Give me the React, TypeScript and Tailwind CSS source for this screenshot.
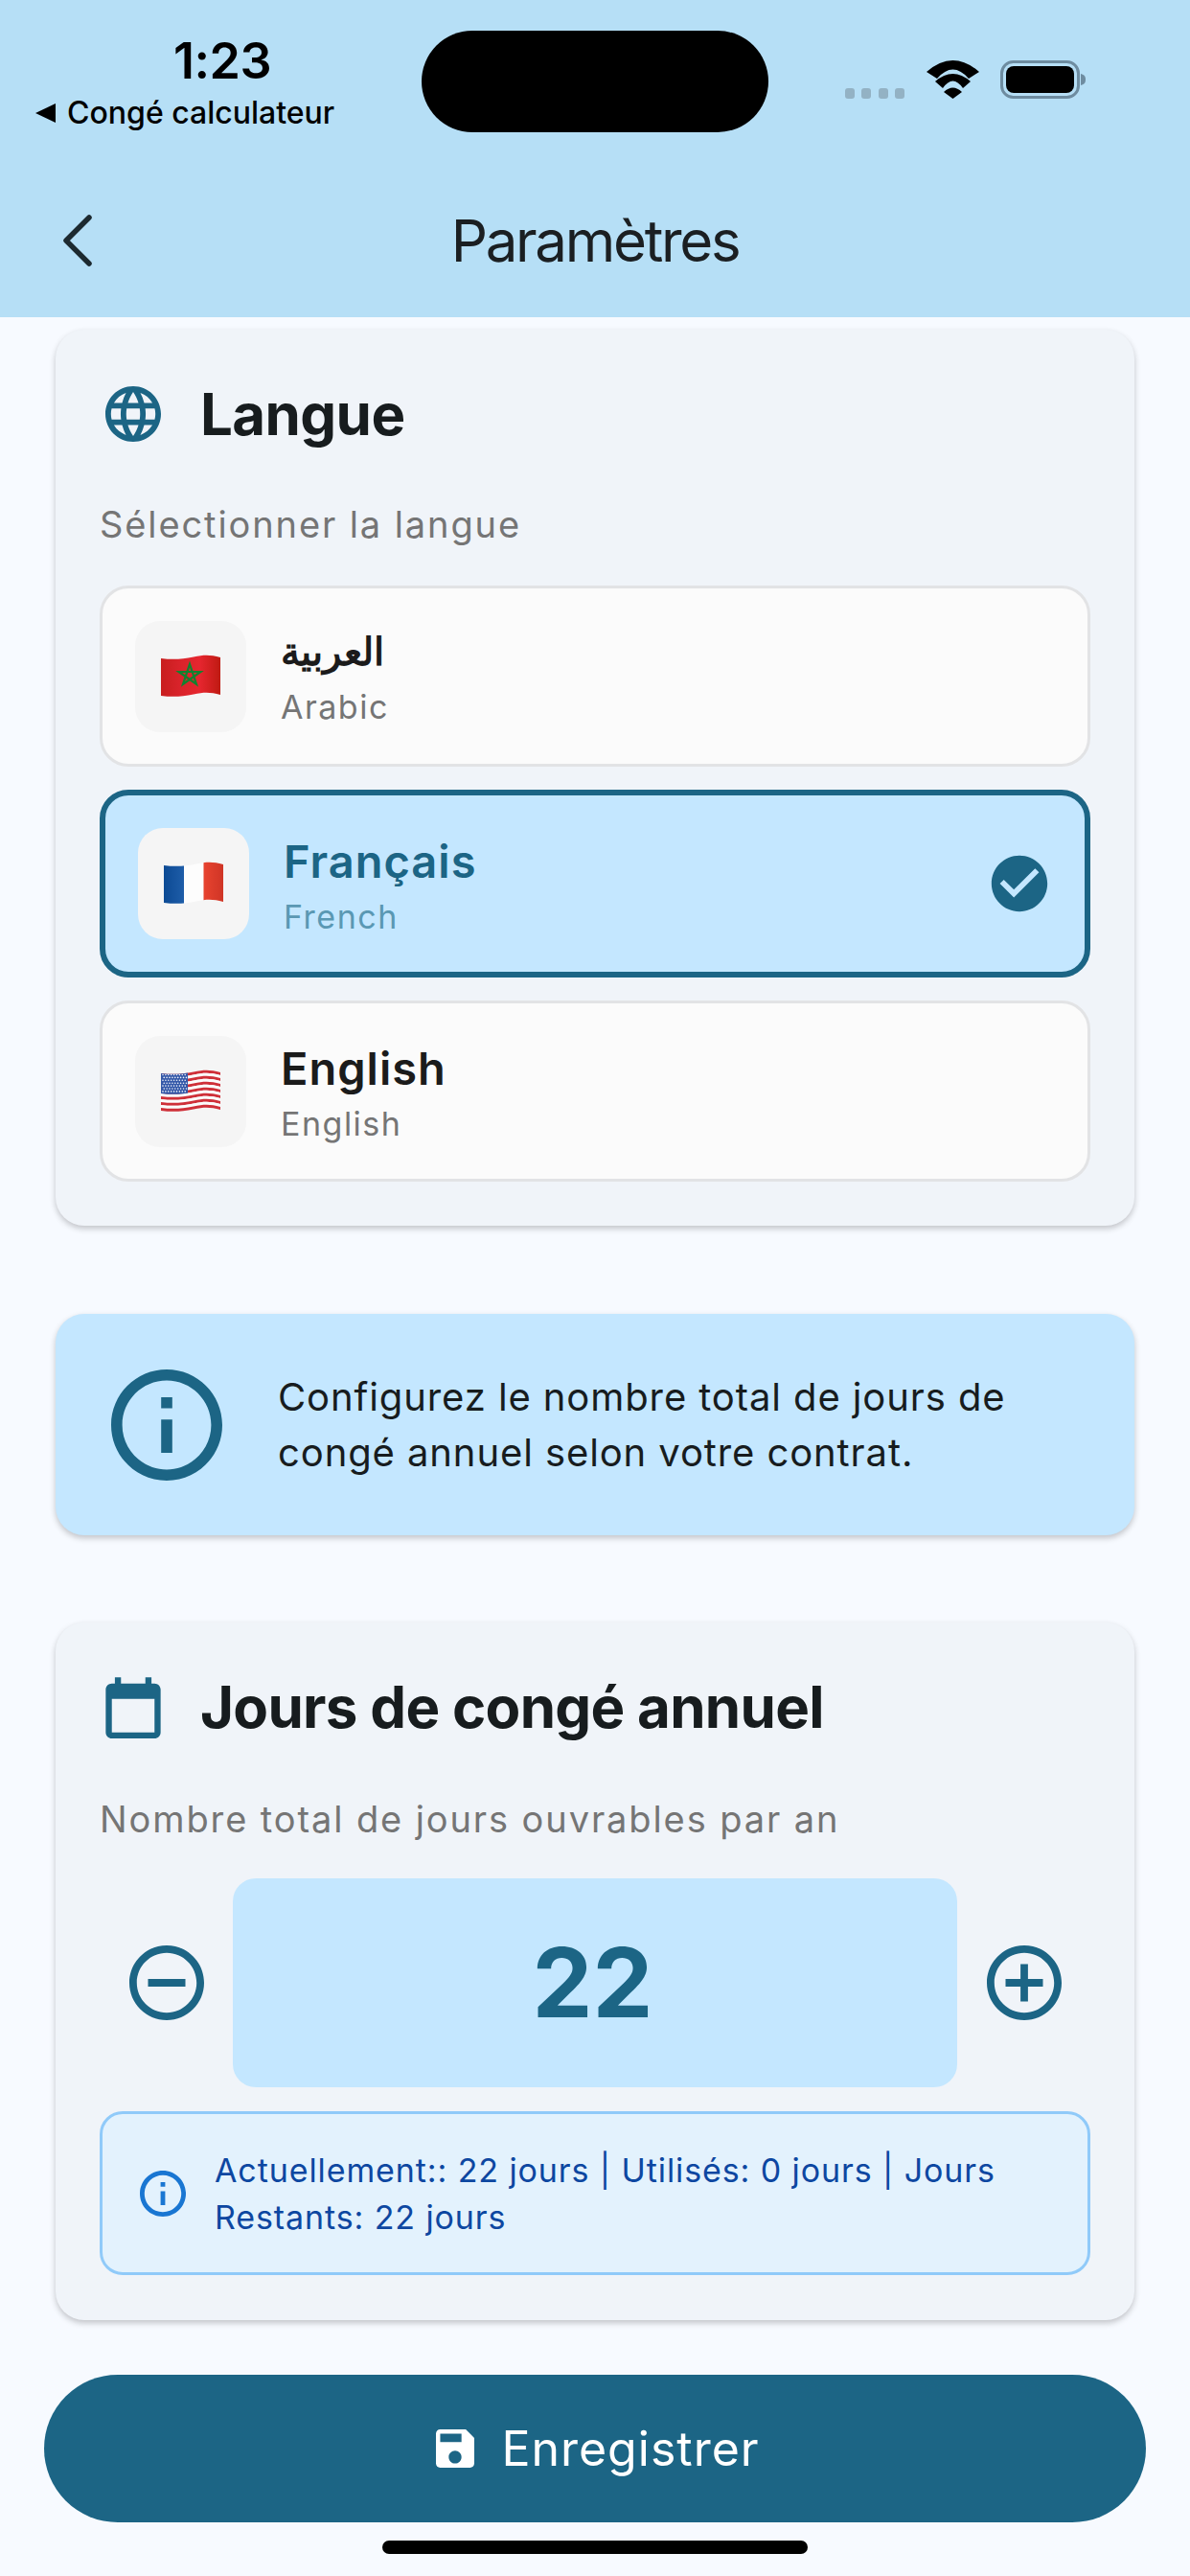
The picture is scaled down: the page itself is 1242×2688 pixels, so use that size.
import React from "react";

const bandPath = (y0: number, y1: number) => {
  const b = y1;
  return `M 0 ${y0} C 12 ${y0 + 1.5}, 22 ${y0 + 1}, 34 ${y0 - 1.5} C 46 ${y0 - 4}, 52 ${y0 - 3.5}, 62 ${y0 - 1} L 62 ${b - 1} C 52 ${b - 3.5}, 46 ${b - 4}, 34 ${b - 1.5} C 22 ${b + 1}, 12 ${b + 1.5}, 0 ${b} Z`;
};

function Morocco() {
  return (
    <svg viewBox="0 0 62 46" className="w-[62px] h-[46px]">
      <defs>
        <linearGradient id="ma" x1="0" x2="1" y1="0" y2="0">
          <stop offset="0" stopColor="#C81E1E" />
          <stop offset="0.3" stopColor="#D8232A" />
          <stop offset="0.65" stopColor="#E6262F" />
          <stop offset="1" stopColor="#BF1A12" />
        </linearGradient>
      </defs>
      <path d={bandPath(4, 43)} fill="url(#ma)" />
      <path d="M30 10 L37 31 L18.600 18 L41.400 18 L23 31 Z" fill="none" stroke="#12822F" strokeWidth="2.200" strokeLinejoin="miter" />
    </svg>
  );
}

function France() {
  return (
    <svg viewBox="0 0 62 46" className="w-[62px] h-[46px]">
      <defs>
        <clipPath id="fr">
          <path d={bandPath(4, 43)} />
        </clipPath>
        <linearGradient id="frb" x1="0" x2="1" y1="0" y2="0">
          <stop offset="0" stopColor="#0C4A94" />
          <stop offset="1" stopColor="#1E5DA8" />
        </linearGradient>
        <linearGradient id="frr" x1="0" x2="1" y1="0" y2="0">
          <stop offset="0" stopColor="#E8432F" />
          <stop offset="1" stopColor="#CF3526" />
        </linearGradient>
      </defs>
      <g clipPath="url(#fr)">
        <rect x="0" y="0" width="21" height="46" fill="url(#frb)" />
        <rect x="21" y="0" width="20.500" height="46" fill="#FDFDFD" />
        <rect x="41.500" y="0" width="20.500" height="46" fill="url(#frr)" />
      </g>
    </svg>
  );
}

function Usa() {
  const stripes = Array.from({ length: 13 }, (_, i) => i);
  const h = 39 / 13;
  const dots: React.ReactNode[] = [];
  for (let r = 0; r < 7; r++) {
    for (let c = 0; c < 9; c++) {
      dots.push(<circle key={`${r}-${c}`} cx={2 + c * 2.9 + (r % 2) * 1.2} cy={5.500 + r * 2.900} r={0.800} fill="#F2F5FB" />);
    }
  }
  return (
    <svg viewBox="0 0 62 46" className="w-[62px] h-[46px]">
      <defs>
        <clipPath id="uscanton">
          <path d={bandPath(4, 25)} />
        </clipPath>
      </defs>
      {stripes.map((i) => (
        <path key={i} d={bandPath(4 + i * h, 4 + (i + 1) * h)} fill={i % 2 === 0 ? "#CF3039" : "#FBFBFB"} />
      ))}
      <g clipPath="url(#uscanton)">
        <rect x="0" y="0" width="28" height="28" fill="#3458A8" />
        {dots}
      </g>
    </svg>
  );
}

function LangRow({
  flag,
  name,
  sub,
  active,
  rtl,
}: {
  flag: React.ReactNode;
  name: string;
  sub: string;
  active?: boolean;
  rtl?: boolean;
}) {
  return (
    <div
      className={
        active
          ? "flex items-center h-[196px] rounded-[30px] border-[6px] border-[#1C6585] bg-[#C4E7FF] pl-[34px] pr-[33px]"
          : "flex items-center h-[189px] rounded-[30px] border-[3px] border-[#E2E3E5] bg-[#FBFBFB] pl-[34px] pr-[33px]"
      }
    >
      <div className="w-[116px] h-[116px] rounded-[26px] bg-[#F5F5F5] flex items-center justify-center shrink-0">
        {flag}
      </div>
      <div className={rtl ? "ml-[36px] pt-[3px] flex flex-col" : "ml-[36px] pt-[7px] flex flex-col"}>
        <div
          className={
            active
              ? "text-[47px] leading-[58px] font-semibold tracking-[1px] text-[#1C6585]"
              : rtl
                ? "text-[40px] leading-[58px] font-semibold text-[#1B1B1B]"
                : "text-[47px] leading-[58px] font-semibold tracking-[1px] text-[#1B1B1B]"
          }
        >
          {name}
        </div>
        <div
          className={
            active
              ? "mt-[4px] text-[34px] leading-[50px] tracking-[1.5px] text-[#5A98B3]"
              : "mt-[4px] text-[34px] leading-[50px] tracking-[1.5px] text-[#757575]"
          }
        >
          {sub}
        </div>
      </div>
      {active && (
        <svg viewBox="0 0 24 24" className="w-[70px] h-[70px] ml-auto" fill="#1C6585">
          <path d="M12 2C6.48 2 2 6.48 2 12s4.48 10 10 10 10-4.48 10-10S17.52 2 12 2zm-2 15l-5-5 1.41-1.41L10 14.17l7.59-7.59L19 8l-9 9z" />
        </svg>
      )}
    </div>
  );
}

const cardCls =
  "mx-[58px] rounded-[30px] bg-[#F0F4F9] shadow-[0_3px_6px_rgba(0,0,0,0.22)]";

export default function App() {
  return (
    <div
      className="w-[1242px] h-[2688px] overflow-hidden bg-[#F7FAFF] flex flex-col"
      style={{ fontFamily: "Inter, 'Noto Sans', 'Liberation Sans', sans-serif" }}
    >
      {/* Header */}
      <div className="h-[331px] bg-[#B6DFF6] flex flex-col shrink-0">
        <div className="h-[170px] flex items-start">
          <div className="w-[440px] pt-[37px] pl-[37px] flex flex-col items-start shrink-0">
            <div className="ml-[144px] text-[52px] leading-[54px] font-semibold tracking-[-0.5px] text-black">1:23</div>
            <div className="flex items-center mt-[7px]">
              <svg viewBox="0 0 21 20" className="w-[21px] h-[20px] mr-[12px]" fill="#000">
                <path d="M21 0 L0 10 L21 20 Z" />
              </svg>
              <span className="text-[32px] leading-[40px] font-medium text-black">Congé calculateur</span>
            </div>
          </div>
          <div className="w-[362px] h-[106px] mt-[32px] rounded-[53px] bg-black shrink-0" />
          <div className="flex items-start mt-[63px] ml-[80px]">
            <svg viewBox="0 0 62 11" className="w-[62px] h-[11px] mt-[29px]" fill="#93B2C4">
              <rect x="0" y="0" width="10" height="11" rx="3" />
              <rect x="17" y="0" width="10" height="11" rx="3" />
              <rect x="35" y="0" width="10" height="11" rx="3" />
              <rect x="52" y="0" width="10" height="11" rx="3" />
            </svg>
            <svg viewBox="0 0 55 40" className="w-[55px] h-[40px] ml-[23px]" fill="#000">
              <path d="M0 12 Q27.500 -12 55 12 L44 19 Q27.500 0 11 19 Z" />
              <path d="M9 22 Q27.500 6 46 22 L38 29 Q27.500 14 17 29 Z" />
              <path d="M18 33 Q27.500 24 37 33 L27.500 40 Z" />
            </svg>
            <svg viewBox="0 0 90 40" className="w-[90px] h-[40px] ml-[22px]">
              <rect x="1.500" y="1.500" width="80" height="37" rx="12" fill="none" stroke="#6E8CA0" strokeWidth="3" />
              <rect x="6" y="6" width="71" height="28" rx="8" fill="#000" />
              <path d="M84 14 C88 15 89 17 89 20 C89 23 88 25 84 26 Z" fill="#6E8CA0" />
            </svg>
          </div>
        </div>
        <div className="flex-1 flex items-center pl-[65px] relative">
          <svg viewBox="0 0 32 54" className="w-[32px] h-[54px]" fill="none" stroke="#1D2A30" strokeWidth="5.500" strokeLinecap="round" strokeLinejoin="round">
            <path d="M28 3 L4 27 L28 51" />
          </svg>
          <div className="absolute inset-0 flex items-center justify-center text-[60px] text-[#1B1F22] tracking-[-2.300px]">
            Paramètres
          </div>
        </div>
      </div>

      {/* Language card */}
      <div className={`${cardCls} mt-[13px] h-[935px] px-[46px] pt-[49px]`}>
        <div className="flex items-center gap-[41px] h-[78px] pl-[6px]">
          <svg viewBox="2 2 20 20" className="w-[58px] h-[58px] shrink-0" fill="#1C6585">
            <path d="M11.99 2C6.47 2 2 6.48 2 12s4.47 10 9.99 10C17.52 22 22 17.52 22 12S17.52 2 11.99 2zm6.93 6h-2.95c-.32-1.25-.78-2.45-1.38-3.56 1.84.63 3.37 1.91 4.33 3.56zM12 4.040c.83 1.200 1.480 2.530 1.910 3.960h-3.820c.43-1.430 1.080-2.760 1.910-3.960zM4.260 14C4.100 13.360 4 12.690 4 12s.1-1.360.26-2h3.380c-.08.66-.14 1.320-.14 2 0 .68.060 1.340.14 2H4.260zm.82 2h2.950c.32 1.250.78 2.450 1.380 3.560-1.840-.63-3.370-1.900-4.330-3.560zm2.950-8H5.080c.96-1.660 2.490-2.930 4.330-3.560C8.810 5.550 8.350 6.750 8.030 8zM12 19.960c-.83-1.200-1.480-2.530-1.910-3.960h3.820c-.43 1.430-1.080 2.760-1.910 3.960zM14.340 14H9.660c-.09-.66-.16-1.320-.16-2 0-.68.070-1.350.16-2h4.680c.09.650.16 1.320.16 2 0 .68-.07 1.340-.16 2zm.25 5.560c.6-1.110 1.060-2.310 1.380-3.560h2.950c-.96 1.650-2.490 2.930-4.330 3.560zM16.360 14c.08-.66.14-1.320.14-2 0-.68-.06-1.340-.14-2h3.380c.16.640.26 1.310.26 2s-.1 1.360-.26 2h-3.380z" />
          </svg>
          <div className="text-[60px] leading-[78px] font-bold tracking-[-0.6px] text-[#171C1E]">Langue</div>
        </div>
        <div className="mt-[51px] text-[38px] leading-[50px] tracking-[1.9px] text-[#757575]">
          Sélectionner la langue
        </div>
        <div className="mt-[39px] flex flex-col gap-[24px]">
          <LangRow flag={<Morocco />} name="العربية" sub="Arabic" rtl />
          <LangRow flag={<France />} name="Français" sub="French" active />
          <LangRow flag={<Usa />} name="English" sub="English" />
        </div>
      </div>

      {/* Info card */}
      <div className="mx-[58px] mt-[92px] h-[231px] rounded-[30px] bg-[#C4E7FF] shadow-[0_3px_6px_rgba(0,0,0,0.22)] flex items-center pl-[58px]">
        <svg viewBox="2 2 20 20" className="w-[116px] h-[116px] shrink-0" fill="#1C6585">
          <path d="M11 7h2v2h-2zm0 4h2v6h-2zm1-9C6.480 2 2 6.480 2 12s4.480 10 10 10 10-4.480 10-10S17.520 2 12 2zm0 18c-4.410 0-8-3.590-8-8s3.590-8 8-8 8 3.590 8 8-3.590 8-8 8z" />
        </svg>
        <div className="ml-[58px] text-[40px] leading-[58px] tracking-[0.9px] text-[#171C1E]">
          Configurez le nombre total de jours de
          <br />
          congé annuel selon votre contrat.
        </div>
      </div>

      {/* Days card */}
      <div className={`${cardCls} mt-[91px] h-[728px] px-[46px] pt-[49px]`}>
        <div className="flex items-center gap-[41px] h-[78px] pl-[6px]">
          <svg viewBox="3 1 18 22" className="w-[58px] h-[70px] shrink-0 -mt-[4px]" fill="#1C6585">
            <path d="M19 3h-1V1h-2v2H8V1H6v2H5c-1.110 0-2 .9-2 2v14c0 1.100.89 2 2 2h14c1.100 0 2-.9 2-2V5c0-1.100-.9-2-2-2zm0 16H5V8h14v11z" transform="translate(0 2)" />
          </svg>
          <div className="text-[60px] leading-[78px] font-bold tracking-[-0.7px] text-[#171C1E]">
            Jours de congé annuel
          </div>
        </div>
        <div className="mt-[53px] text-[38px] leading-[50px] tracking-[1.9px] text-[#757575]">
          Nombre total de jours ouvrables par an
        </div>
        <div className="mt-[37px] flex items-center">
          <div className="w-[139px] flex justify-center shrink-0">
            <svg viewBox="2 2 20 20" className="w-[78px] h-[78px]" fill="#1C6585">
              <path d="M7 11v2h10v-2H7zm5-9C6.480 2 2 6.480 2 12s4.480 10 10 10 10-4.480 10-10S17.520 2 12 2zm0 18c-4.410 0-8-3.590-8-8s3.590-8 8-8 8 3.590 8 8-3.590 8-8 8z" />
            </svg>
          </div>
          <div className="w-[756px] h-[218px] pr-[5px] rounded-[24px] bg-[#C4E7FF] flex items-center justify-center text-[100px] font-bold text-[#1C6585]">
            22
          </div>
          <div className="flex-1 flex justify-center">
            <svg viewBox="2 2 20 20" className="w-[78px] h-[78px]" fill="#1C6585">
              <path d="M13 7h-2v4H7v2h4v4h2v-4h4v-2h-4V7zm-1-5C6.480 2 2 6.480 2 12s4.480 10 10 10 10-4.480 10-10S17.520 2 12 2zm0 18c-4.410 0-8-3.590-8-8s3.590-8 8-8 8 3.590 8 8-3.590 8-8 8z" />
            </svg>
          </div>
        </div>
        <div className="mt-[25px] h-[171px] rounded-[24px] border-[3px] border-[#90CAF9] bg-[#E3F2FD] flex items-center pl-[39px]">
          <svg viewBox="2 2 20 20" className="w-[48px] h-[48px] shrink-0" fill="#1976D2">
            <path d="M11 7h2v2h-2zm0 4h2v6h-2zm1-9C6.480 2 2 6.480 2 12s4.480 10 10 10 10-4.480 10-10S17.520 2 12 2zm0 18c-4.410 0-8-3.590-8-8s3.590-8 8-8 8 3.590 8 8-3.590 8-8 8z" />
          </svg>
          <div className="ml-[30px] text-[34px] leading-[49px] tracking-[0.9px] text-[#0D47A1]">
            Actuellement:: 22 jours | Utilisés: 0 jours | Jours
            <br />
            Restants: 22 jours
          </div>
        </div>
      </div>

      {/* Save button */}
      <div className="mx-[46px] mt-[57px] h-[154px] pl-[6px] rounded-full bg-[#1C6585] flex items-center justify-center shrink-0">
        <svg viewBox="3 3 18 18" className="w-[40px] h-[40px] shrink-0" fill="#fff">
          <path d="M17 3H5c-1.110 0-2 .9-2 2v14c0 1.100.89 2 2 2h14c1.100 0 2-.9 2-2V7l-4-4zm-5 16c-1.660 0-3-1.340-3-3s1.340-3 3-3 3 1.340 3 3-1.340 3-3 3zm3-10H5V5h10v4z" />
        </svg>
        <div className="ml-[28px] text-[50px] tracking-[1px] text-white">Enregistrer</div>
      </div>

      {/* Home bar */}
      <div className="mt-[19px] mx-auto w-[444px] h-[14px] rounded-full bg-black shrink-0" />
    </div>
  );
}
